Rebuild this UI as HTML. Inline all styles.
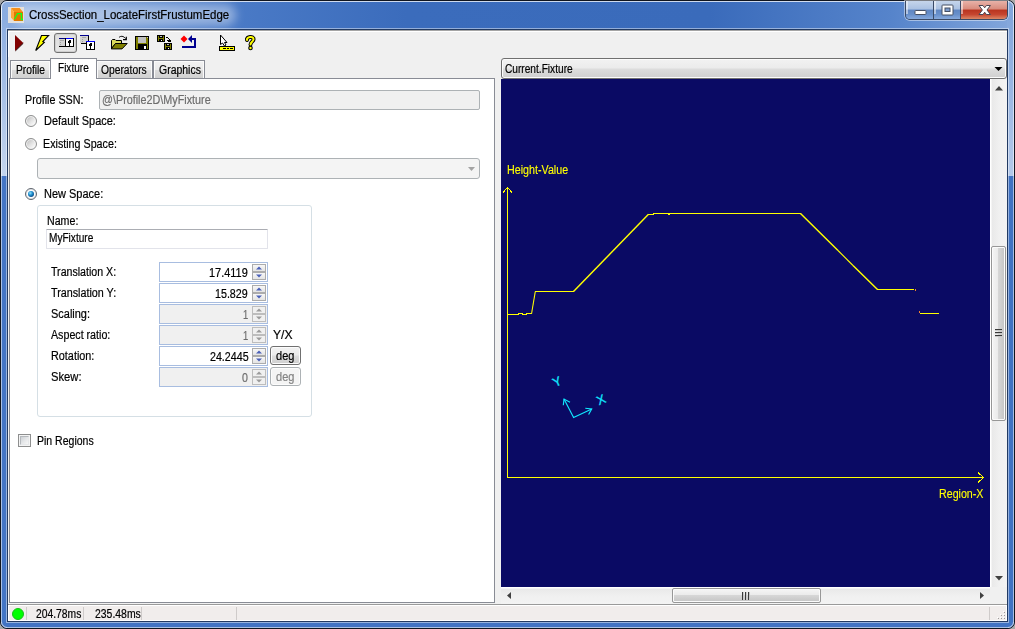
<!DOCTYPE html>
<html><head><meta charset="utf-8">
<title>CrossSection_LocateFirstFrustumEdge</title>
<style>
html,body{margin:0;padding:0;}
body{width:1015px;height:629px;overflow:hidden;position:relative;background:#a9a9a9;font-family:"Liberation Sans",sans-serif;font-size:11px;color:#000;}
.abs,.abs *{position:absolute;box-sizing:border-box;}
#frame{left:0;top:0;width:1015px;height:629px;border:1px solid #10151f;border-radius:7px;
 background:linear-gradient(90deg,#8cade0 0%,#7ea3da 6%,#4b7bc7 22%,#3b6cbc 40%,#3a6bbb 70%,#5684cb 88%,#84a7dc 100%) 0 0/100% 29px no-repeat,#4173c3;}
#frame .inner{left:0;top:0;right:0;bottom:0;border:1px solid rgba(255,255,255,.75);border-radius:6px;}
#clientborder{left:6px;top:28px;width:1003px;height:595px;border:1px solid rgba(255,255,255,.45);}
#clientborder2{left:7px;top:29px;width:1001px;height:593px;border:1px solid #223a62;}
#client{left:8px;top:30px;width:999px;height:591px;background:#f0f0f0;}
.t{white-space:nowrap;line-height:13px;font-size:11px;}

/* title buttons */
#tb{left:905px;top:1px;width:103px;height:19px;border:1px solid #3a4a66;border-top:none;border-radius:0 0 5px 5px;overflow:hidden;box-shadow:0 0 0 1px rgba(255,255,255,.45);}
#tb .b{top:0;height:18px;}
#tb .min{left:0;width:28px;background:linear-gradient(#c6d5eb 0%,#aac1e2 45%,#5f86c2 50%,#6890cb 75%,#86a9dc 100%);border-right:1px solid #3a4a66;}
#tb .max{left:28px;width:27px;background:linear-gradient(#c6d5eb 0%,#aac1e2 45%,#5f86c2 50%,#6890cb 75%,#86a9dc 100%);border-right:1px solid #3a4a66;}
#tb .cls{left:55px;width:46px;background:linear-gradient(#e8b2a8 0%,#d88b7d 45%,#b9341f 50%,#c64630 75%,#dc8866 100%);}
#tb .b:after{content:"";left:0;top:0;right:0;bottom:0;border:1px solid rgba(255,255,255,.5);border-top:none;}
/* toolbar */
#toolbar{left:8px;top:30px;width:999px;height:27px;background:#f0f0f0;border-top:1px solid #a5a5a5;box-shadow:inset 1px 1px 0 #fff;}
#tbact{left:54px;top:33px;width:23px;height:20px;border:1px solid #707070;border-radius:3px;background:linear-gradient(#dedede,#e6e6e6);box-shadow:inset 0 0 0 1px #cfcfcf;}
/* tabs */
.tab{top:60px;height:18px;border:1px solid #898c95;border-bottom:none;background:linear-gradient(#f2f2f2 0%,#ebebeb 50%,#dddddd 50%,#d0d0d0 100%);box-shadow:inset 1px 1px 0 #fbfbfb,inset -1px 0 0 #fbfbfb;}
.tab .t{top:3px;}
#tabsel{left:50px;top:58px;width:47px;height:21px;border:1px solid #898c95;border-bottom:none;background:#fff;}
#tabbody{left:9px;top:78px;width:486px;height:525px;border:1px solid #898c95;background:#fff;}

#fl{left:1px;top:20px;width:7px;height:156px;background:linear-gradient(#8cade0,#c4d5ee);}
#fl2{left:1px;top:176px;width:7px;height:446px;background:#4375c5;}
#fr{left:1007px;top:20px;width:7px;height:156px;background:linear-gradient(#84a7dc,#b4c9ea);}
#fr2{left:1007px;top:176px;width:7px;height:446px;background:#4072c2;}
#fb{left:7px;top:621px;width:1001px;height:7px;background:#4173c3;}
.hl{background:rgba(255,255,255,.55);}

.tx{font-size:12px;line-height:16px;white-space:nowrap;transform-origin:0 0;-webkit-text-stroke:0.2px;}
#glow{left:14px;top:4px;width:222px;height:22px;border-radius:11px;background:rgba(255,255,255,.40);filter:blur(5px);}
/* form */
.inp{background:#fff;border:1px solid #e2e3ea;border-top-color:#abadb3;border-radius:1px;}
.dis{background:#f0f0f0;border:1px solid #adb2b5;border-radius:2px;}
.radio{width:12px;height:12px;border-radius:6px;border:1px solid #8e8f8f;background:linear-gradient(135deg,#c4c4c4 15%,#e2e2e2 50%,#fbfbfb 85%);box-shadow:inset 0 0 0 1px #f3f3f3;}
.radio.on{background:#fff;border-color:#5f656d;box-shadow:inset 0 0 0 1px #dfe2e5;}
.radio.on i{left:2px;top:2px;width:6px;height:6px;border-radius:3px;background:radial-gradient(circle at 38% 35%,#9ae0fa 0%,#2294d2 36%,#0d5390 70%,#183a68 100%);}
#grp{left:37px;top:205px;width:275px;height:212px;border:1px solid #d5dfe5;border-radius:3px;}
.spin{left:159px;width:109px;height:20px;border:1px solid #a8bde0;background:#fff;}
.spin.d{background:#f0f0f0;}
.sb{left:92px;width:14px;height:8px;border:1px solid #acacac;background:linear-gradient(#f7f7f7,#e4e4e4);}
.sb.u{top:1px;} .sb.dn{top:9px;}
.spin.d .sb{border-color:#bdbdbd;background:#f0f0f0;}
.btn{left:270px;width:31px;height:19px;border:1px solid #707070;border-radius:3px;background:linear-gradient(#f2f2f2 0%,#ebebeb 48%,#dddddd 52%,#cfcfcf 100%);box-shadow:inset 0 0 0 1px #fcfcfc;}
.btn.d{border-color:#adb2b5;background:#f4f4f4;}
#chk{left:18px;top:434px;width:13px;height:13px;border:1px solid #8e8f8f;background:#f4f4f4;}
#chk i{left:1px;top:1px;width:9px;height:9px;border:1px solid #b5b9bd;border-right-color:#e6e8ea;border-bottom-color:#e6e8ea;background:linear-gradient(135deg,#cdd1d5 0%,#e4e6e8 50%,#f6f6f6 100%);}
/* right */
#combo{left:501px;top:58px;width:506px;height:21px;border:1px solid #707070;border-radius:3px;background:linear-gradient(#f2f2f2 0%,#ebebeb 48%,#dddddd 52%,#cfcfcf 100%);box-shadow:inset 0 0 0 1px #fcfcfc;}
#canvas{left:501px;top:79px;width:489px;height:508px;background:#0a0a64;}
#vs{left:990px;top:79px;width:17px;height:508px;background:linear-gradient(90deg,#ffffff 0,#ffffff 1px,#e9e9e9 2px,#f0f0f0 9px,#f3f3f3 100%);}
#vth{left:991px;top:246px;width:15px;height:175px;border:1px solid #979797;border-radius:2px;background:linear-gradient(90deg,#f5f5f5 0%,#ebebeb 45%,#d6d6d6 50%,#c4c4c4 100%);box-shadow:inset 0 0 0 1px #fbfbfb;}
#hs{left:501px;top:587px;width:489px;height:17px;background:linear-gradient(#ffffff 0,#ffffff 1px,#e9e9e9 2px,#f0f0f0 9px,#f3f3f3 100%);}
#hth{left:672px;top:588px;width:149px;height:15px;border:1px solid #979797;border-radius:2px;background:linear-gradient(#f5f5f5 0%,#ebebeb 45%,#d6d6d6 50%,#c4c4c4 100%);box-shadow:inset 0 0 0 1px #fbfbfb;}
#corner{left:990px;top:587px;width:17px;height:17px;background:#f0f0f0;}
/* status */
#status{left:8px;top:604px;width:999px;height:17px;background:#f1edec;border-top:1px solid #9a9a9a;box-shadow:inset 1px 1px 0 #fff,inset -1px -1px 0 #fff;}
.sep{top:607px;width:1px;height:13px;background:#cfcbca;}
</style></head><body>
<div class="abs" id="frame"><div class="inner"></div></div>
<div class="abs" id="fl"></div><div class="abs" id="fl2"></div><div class="abs" id="fr"></div><div class="abs" id="fr2"></div><div class="abs" id="fb"></div>
<div class="abs hl" style="left:1px;top:8px;width:1px;height:614px;"></div><div class="abs hl" style="left:1013px;top:8px;width:1px;height:614px;"></div><div class="abs hl" style="left:7px;top:627px;width:1001px;height:1px;"></div>
<div class="abs" id="clientborder"></div>
<div class="abs" id="clientborder2"></div>
<div class="abs" id="glow"></div><svg class="abs" style="left:8px;top:7px" width="16" height="16" viewBox="8 7 16 16">
<rect x="8" y="7" width="16" height="16" fill="#e4e0dc"/>
<polygon points="11,8 19.600,8 23,12 14,12" fill="#f5901a"/>
<polygon points="11,8 14,12 14,21 11,17.500" fill="#ffa840"/>
<polygon points="14,12 23,12 23,21 14,21" fill="#e07800"/>
<path d="M14.500 19.300 L17.500 13.700 L21.400 13.700 L21.400 19.500 L23 19.500" fill="none" stroke="#10ff20" stroke-width="1.300"/>
</svg>
<div class="abs" id="client"></div>
<div class="abs" id="tb"><div class="b min"></div><div class="b max"></div><div class="b cls"></div>
<svg style="left:0;top:0" width="103" height="19" viewBox="0 0 103 19">
<rect x="9" y="9.500" width="11" height="4" rx="0.800" fill="#fff" stroke="#454f63" stroke-width="1"/>
<rect x="36" y="4" width="11" height="10" rx="0.800" fill="#fff" stroke="#454f63" stroke-width="1"/>
<rect x="39" y="7" width="5" height="3.500" fill="#7d9ccd" stroke="#454f63" stroke-width="1"/>
<path d="M73 4.500 L77 4.500 L78.700 6.800 L80.400 4.500 L84.400 4.500 L81 9 L84.400 13.500 L80.400 13.500 L78.700 11.200 L77 13.500 L73 13.500 L76.400 9 Z" fill="#fff" stroke="#4a4550" stroke-width="1" stroke-linejoin="round"/>
</svg></div>
<div class="abs" id="toolbar"></div>
<div class="abs" id="tbact"></div>
<svg class="abs" style="left:0;top:30px" width="300" height="28" viewBox="0 30 300 28">
<!-- play -->
<polygon points="15,35 23.300,43 15,51" fill="#800000"/>
<path d="M15.500 50.800 L23.300 43.200" stroke="#200000" stroke-width="1" fill="none"/>
<!-- lightning -->
<polygon points="41.500,35.500 48.600,35.500 42.800,41.600 44.300,42.400 35.700,50.500" fill="#ffff00" stroke="#000" stroke-width="1.100" stroke-linejoin="miter"/>
<g shape-rendering="crispEdges">
<!-- panes icon -->
<rect x="59" y="38" width="7" height="1" fill="#000080"/>
<rect x="66" y="38" width="8" height="1" fill="#0000ff"/>
<rect x="59" y="39" width="6" height="7" fill="#d2d2d2"/>
<rect x="65" y="38" width="1" height="9" fill="#000"/>
<rect x="66" y="39" width="7" height="7" fill="#fff"/>
<rect x="73" y="38" width="1" height="9" fill="#000"/>
<rect x="59" y="46" width="15" height="1" fill="#000"/>
<rect x="60" y="40" width="4" height="1" fill="#a8a8a8"/>
<rect x="60" y="42" width="1" height="1" fill="#a0a0a0"/>
<rect x="60" y="44" width="1" height="1" fill="#a0a0a0"/>
<rect x="68" y="40" width="3" height="3" fill="#000"/>
<rect x="68" y="40" width="1" height="1" fill="#fff"/>
<rect x="69" y="43" width="1" height="3" fill="#000"/>
<!-- cascaded windows -->
<rect x="80" y="35" width="9" height="1" fill="#000090"/>
<rect x="80" y="36" width="8" height="7" fill="#d2d2d2"/>
<rect x="88" y="36" width="1" height="8" fill="#000"/>
<rect x="81" y="43" width="8" height="1" fill="#000"/>
<rect x="82" y="37" width="4" height="1" fill="#a8a8a8"/>
<rect x="82" y="39" width="1" height="1" fill="#a0a0a0"/>
<rect x="82" y="41" width="1" height="1" fill="#a0a0a0"/>
<rect x="86" y="41" width="9" height="1" fill="#0000ff"/>
<rect x="86" y="42" width="1" height="8" fill="#000"/>
<rect x="87" y="42" width="7" height="7" fill="#fff"/>
<rect x="94" y="42" width="1" height="8" fill="#000"/>
<rect x="86" y="49" width="9" height="1" fill="#000"/>
<rect x="89" y="43" width="3" height="3" fill="#000"/>
<rect x="89" y="43" width="1" height="1" fill="#fff"/>
<rect x="90" y="46" width="1" height="3" fill="#000"/>
<!-- floppy -->
<rect x="135" y="36" width="14" height="14" fill="#000"/>
<rect x="136" y="37" width="12" height="12" fill="#808000"/>
<rect x="138" y="37" width="8" height="6" fill="#c0c0c0"/>
<rect x="147" y="37" width="1" height="1" fill="#c0c0c0"/>
<rect x="138" y="44" width="9" height="5" fill="#000"/>
<rect x="144" y="46" width="2" height="3" fill="#fff"/>
<!-- double floppy -->
<rect x="157" y="35" width="8" height="7" fill="#000"/>
<rect x="158" y="36" width="6" height="5" fill="#808000"/>
<rect x="159" y="36" width="4" height="2" fill="#000"/>
<rect x="160" y="36" width="2" height="1" fill="#c0c0c0"/>
<rect x="159" y="39" width="4" height="2" fill="#000"/>
<rect x="161" y="40" width="1" height="1" fill="#fff"/>
<rect x="164" y="43" width="8" height="7" fill="#000"/>
<rect x="165" y="44" width="6" height="5" fill="#808000"/>
<rect x="166" y="44" width="4" height="2" fill="#000"/>
<rect x="167" y="44" width="2" height="1" fill="#c0c0c0"/>
<rect x="166" y="47" width="4" height="2" fill="#000"/>
<rect x="168" y="48" width="1" height="1" fill="#fff"/>
<rect x="166" y="37" width="2" height="1" fill="#000"/>
<rect x="168" y="38" width="1" height="1" fill="#000"/>
<rect x="169" y="39" width="1" height="2" fill="#000"/>
<rect x="167" y="40" width="4" height="1" fill="#000"/>
<rect x="168" y="41" width="3" height="1" fill="#000"/>
<!-- blue arrow -->
<rect x="182" y="46" width="14" height="2" fill="#000090"/>
<rect x="194" y="38" width="2" height="9" fill="#000090"/>
<rect x="189" y="38" width="6" height="2" fill="#000090"/>
<!-- ruler -->
<rect x="219" y="46" width="16" height="5" fill="#000"/>
<rect x="220" y="47" width="14" height="3" fill="#ffff00"/>
<rect x="223" y="48" width="3" height="1" fill="#000"/>
<rect x="227" y="48" width="2" height="1" fill="#000"/>
<rect x="230" y="48" width="3" height="1" fill="#000"/>
</g>
<!-- folder -->
<path d="M111.500 48.500 L111.500 40.500 L112.500 39.500 L115 39.500 L116 40.500 L121.500 40.500 L121.500 43.500 L115.500 43.500 Z" fill="#dada5c" stroke="#000" stroke-width="1"/>
<path d="M115.500 43.500 L127.200 43.500 L122 48.900 L111.200 48.900 Z" fill="#808000" stroke="#000" stroke-width="1"/>
<path d="M119 37.500 C120.500 35.800 123.500 35.800 125.500 38.500" fill="none" stroke="#000" stroke-width="1"/>
<path d="M123 39.700 L126.300 39.700 L126.300 36.800" fill="none" stroke="#000" stroke-width="1.200"/>
<!-- red dot & arrowhead -->
<polygon points="184,35.500 187.500,39 184,42.500 180.500,39" fill="#ff0000"/>
<polygon points="188,39 192,35 192,43" fill="#000090"/>
<!-- cursor -->
<path d="M220.500 35 L220.500 44.500 L222.500 43 L224.500 46 L226 45 L224.500 42.500 L227 42.500 Z" fill="#fff" stroke="#000" stroke-width="1"/>
<!-- question -->
<path d="M247 40 C246 36.500 254 35.500 253.500 39.500 C253.300 41.500 250.500 42 250.500 44.500" fill="none" stroke="#000" stroke-width="4" stroke-linecap="round"/>
<circle cx="250.500" cy="48" r="2.300" fill="#000"/>
<path d="M247 40 C246 36.500 254 35.500 253.500 39.500 C253.300 41.500 250.500 42 250.500 44.500" fill="none" stroke="#ffff00" stroke-width="2" stroke-linecap="round"/>
<circle cx="250.500" cy="48" r="1.200" fill="#ffff00"/>
</svg>
<div class="abs" id="tabbody"></div>
<div class="abs tab" style="left:10px;width:41px;"></div>
<div class="abs tab" style="left:96px;width:57px;"></div>
<div class="abs tab" style="left:153px;width:52px;"></div>
<div class="abs" id="tabsel"></div>
<div class="abs dis" style="left:99px;top:90px;width:381px;height:20px;"></div>
<div class="abs radio" style="left:25px;top:115px;"></div>
<div class="abs radio" style="left:25px;top:138px;"></div>
<div class="abs dis" style="left:37px;top:158px;width:443px;height:21px;background:#f4f4f4;border-radius:3px;"></div>
<svg class="abs" style="left:466px;top:165px" width="10" height="8" viewBox="0 0 10 8"><polygon points="2,2 9,2 5.500,6" fill="#a3a3a3"/></svg>
<div class="abs radio on" style="left:25px;top:188px;"><i></i></div>
<div class="abs" id="grp"></div>
<div class="abs inp" style="left:46px;top:229px;width:222px;height:20px;"></div>
<div class="abs spin" style="top:262px;"><div class="sb u"></div><div class="sb dn"></div><svg style="left:92px;top:1px" width="14" height="16" viewBox="0 0 14 16"><polygon points="7,2.500 10,5.500 4,5.500" fill="#4a60b8"/><polygon points="4,10.500 10,10.500 7,13.500" fill="#4a60b8"/></svg></div>
<div class="abs spin" style="top:283px;"><div class="sb u"></div><div class="sb dn"></div><svg style="left:92px;top:1px" width="14" height="16" viewBox="0 0 14 16"><polygon points="7,2.500 10,5.500 4,5.500" fill="#4a60b8"/><polygon points="4,10.500 10,10.500 7,13.500" fill="#4a60b8"/></svg></div>
<div class="abs spin d" style="top:304px;"><div class="sb u"></div><div class="sb dn"></div><svg style="left:92px;top:1px" width="14" height="16" viewBox="0 0 14 16"><polygon points="7,2.500 10,5.500 4,5.500" fill="#9a9a9a"/><polygon points="4,10.500 10,10.500 7,13.500" fill="#9a9a9a"/></svg></div>
<div class="abs spin d" style="top:325px;"><div class="sb u"></div><div class="sb dn"></div><svg style="left:92px;top:1px" width="14" height="16" viewBox="0 0 14 16"><polygon points="7,2.500 10,5.500 4,5.500" fill="#9a9a9a"/><polygon points="4,10.500 10,10.500 7,13.500" fill="#9a9a9a"/></svg></div>
<div class="abs spin" style="top:346px;"><div class="sb u"></div><div class="sb dn"></div><svg style="left:92px;top:1px" width="14" height="16" viewBox="0 0 14 16"><polygon points="7,2.500 10,5.500 4,5.500" fill="#4a60b8"/><polygon points="4,10.500 10,10.500 7,13.500" fill="#4a60b8"/></svg></div>
<div class="abs spin d" style="top:367px;"><div class="sb u"></div><div class="sb dn"></div><svg style="left:92px;top:1px" width="14" height="16" viewBox="0 0 14 16"><polygon points="7,2.500 10,5.500 4,5.500" fill="#9a9a9a"/><polygon points="4,10.500 10,10.500 7,13.500" fill="#9a9a9a"/></svg></div>
<div class="abs btn" style="top:346px;"></div>
<div class="abs btn d" style="top:367px;"></div>
<div class="abs" id="chk"><i></i></div>
<div class="abs" id="combo"></div>
<svg class="abs" style="left:993px;top:65px" width="12" height="8" viewBox="0 0 12 8"><polygon points="1.500,2 9.500,2 5.500,6" fill="#000"/></svg>
<div class="abs" id="canvas"></div>
<div class="abs" id="vs"></div><div class="abs" id="vth"></div>
<div class="abs" id="hs"></div><div class="abs" id="hth"></div>
<div class="abs" id="corner"></div>
<svg class="abs" style="left:501px;top:79px" width="506" height="525" viewBox="501 79 506 525">
<g shape-rendering="crispEdges" fill="none" stroke="#ffff00" stroke-width="1">
<path d="M507.500 477.500 L507.500 187"/>
<path d="M503 192.500 L507.500 187.500 L512 192.500"/>
<path d="M507 477.500 L984 477.500"/>
<path d="M978 472.500 L983.500 477.500 L978 482.500"/>
<path d="M507 314.500 L518 314.500 L519 313.500 L522 313.500 L523 314.500 L526 314.500 L527 313.500 L531 313.500"/>
<path d="M535 291.500 L574 291.500"/>
<path d="M648 214.500 L653 214.500 L654 213.500 L668 213.500 L669 214.500 L670 213.500 L801 213.500"/>
<path d="M877 289.500 L914 289.500"/>
<path d="M920 313.500 L939 313.500"/>
</g>
<g fill="none" stroke="#ffff00" stroke-width="1.450"><path d="M573.500 291.500 L648.500 214.300"/><path d="M800.500 213.500 L838 250.500 M853 265.500 L877.500 289.500"/></g>
<g fill="none" stroke="#ffff00" stroke-width="1.100"><path d="M531.500 314 L535.300 291.500"/><path d="M838 250.500 L853 265.500"/></g>
<rect x="915" y="289" width="1" height="2" fill="#f08030"/>
<rect x="919" y="311" width="1" height="2" fill="#f08030"/>
<g fill="none" stroke="#10e8ff" stroke-width="1.150">
<path d="M591.700 408.900 L573.600 417.500 L564 399.100"/>
<path d="M585.300 408.300 L591.700 408.900 L588.600 414.600"/>
<path d="M563.300 405.300 L564 399.100 L570 402.200"/>
</g>
<g fill="#3a3a3a" shape-rendering="crispEdges">
<rect x="995" y="329" width="7" height="1"/><rect x="995" y="332" width="7" height="1"/><rect x="995" y="335" width="7" height="1"/>
<rect x="742" y="592" width="1" height="8"/><rect x="745" y="592" width="1" height="8"/><rect x="748" y="592" width="1" height="8"/>
</g>
<g fill="#c8c8c8" shape-rendering="crispEdges">
<rect x="995" y="330" width="7" height="1"/><rect x="995" y="333" width="7" height="1"/><rect x="995" y="336" width="7" height="1"/>
<rect x="743" y="592" width="1" height="8"/><rect x="746" y="592" width="1" height="8"/><rect x="749" y="592" width="1" height="8"/>
</g>
<g fill="#404040">
<polygon points="995,90.500 1003,90.500 999,86"/>
<polygon points="995,576 1003,576 999,580.500"/>
<polygon points="507,595.500 511,592 511,599"/>
<polygon points="984,595.500 980,592 980,599"/>
</g>
</svg>
<div class="abs tx" style="left:553px;top:374px;color:#10e8ff;font-size:12.5px;-webkit-text-stroke:0.3px #10e8ff;transform:rotate(-24deg);transform-origin:50% 50%;">Y</div>
<div class="abs tx" style="left:597px;top:392px;color:#10e8ff;font-size:12.5px;-webkit-text-stroke:0.3px #10e8ff;transform:rotate(-24deg);transform-origin:50% 50%;">X</div>

<div class="abs" id="status"></div>
<div class="abs" style="left:12px;top:608px;width:12px;height:12px;border-radius:6px;background:#00ff00;border:1px solid #18c018;"></div>
<div class="abs sep" style="left:26px;"></div><div class="abs sep" style="left:83px;"></div><div class="abs sep" style="left:141px;"></div><div class="abs sep" style="left:236px;"></div><div class="abs sep" style="left:989px;"></div>
<svg class="abs" style="left:994px;top:608px" width="12" height="12" viewBox="994 608 12 12" shape-rendering="crispEdges"><g fill="#fff"><rect x="1003" y="611" width="1" height="1"/><rect x="1000" y="614" width="1" height="1"/><rect x="1003" y="614" width="1" height="1"/><rect x="997" y="617" width="1" height="1"/><rect x="1000" y="617" width="1" height="1"/><rect x="1003" y="617" width="1" height="1"/></g><g fill="#9c9898"><rect x="1004" y="612" width="1" height="1"/><rect x="1001" y="615" width="1" height="1"/><rect x="1004" y="615" width="1" height="1"/><rect x="998" y="618" width="1" height="1"/><rect x="1001" y="618" width="1" height="1"/><rect x="1004" y="618" width="1" height="1"/></g></svg>

<!--TEXTS-->
<div class="abs tx" style="left:28.68px;top:7px;color:#000;transform:scaleX(0.9559);">CrossSection_LocateFirstFrustumEdge</div>
<div class="abs tx" style="left:16.41px;top:62px;color:#000;transform:scaleX(0.8537);">Profile</div>
<div class="abs tx" style="left:58.12px;top:60px;color:#000;transform:scaleX(0.8377);">Fixture</div>
<div class="abs tx" style="left:101.03px;top:62px;color:#000;transform:scaleX(0.8566);">Operators</div>
<div class="abs tx" style="left:158.70px;top:62px;color:#000;transform:scaleX(0.8725);">Graphics</div>
<div class="abs tx" style="left:25.19px;top:92px;color:#000;transform:scaleX(0.8942);">Profile SSN:</div>
<div class="abs tx" style="left:101.86px;top:92px;color:#6d6d6d;transform:scaleX(0.8988);">@\Profile2D\MyFixture</div>
<div class="abs tx" style="left:43.70px;top:113px;color:#000;transform:scaleX(0.9126);">Default Space:</div>
<div class="abs tx" style="left:43.40px;top:136px;color:#000;transform:scaleX(0.8929);">Existing Space:</div>
<div class="abs tx" style="left:44.25px;top:186px;color:#000;transform:scaleX(0.9154);">New Space:</div>
<div class="abs tx" style="left:46.60px;top:213px;color:#000;transform:scaleX(0.8869);">Name:</div>
<div class="abs tx" style="left:49.38px;top:230px;color:#000;transform:scaleX(0.8407);">MyFixture</div>
<div class="abs tx" style="left:51.31px;top:264px;color:#000;transform:scaleX(0.8851);">Translation X:</div>
<div class="abs tx" style="left:51.28px;top:285px;color:#000;transform:scaleX(0.8966);">Translation Y:</div>
<div class="abs tx" style="left:50.75px;top:306px;color:#000;transform:scaleX(0.9139);">Scaling:</div>
<div class="abs tx" style="left:50.96px;top:327px;color:#000;transform:scaleX(0.8887);">Aspect ratio:</div>
<div class="abs tx" style="left:51.33px;top:348px;color:#000;transform:scaleX(0.9026);">Rotation:</div>
<div class="abs tx" style="left:50.55px;top:369px;color:#000;transform:scaleX(0.9369);">Skew:</div>
<div class="abs tx" style="left:209.42px;top:265px;color:#000;transform:scaleX(0.9113);">17.4119</div>
<div class="abs tx" style="left:215.36px;top:286px;color:#000;transform:scaleX(0.8909);">15.829</div>
<div class="abs tx" style="left:243.05px;top:307px;color:#6d6d6d;transform:scaleX(0.7800);">1</div>
<div class="abs tx" style="left:243.05px;top:328px;color:#6d6d6d;transform:scaleX(0.7800);">1</div>
<div class="abs tx" style="left:210.19px;top:349px;color:#000;transform:scaleX(0.8892);">24.2445</div>
<div class="abs tx" style="left:242.35px;top:370px;color:#6d6d6d;transform:scaleX(0.8841);">0</div>
<div class="abs tx" style="left:272.58px;top:327px;color:#000;transform:scaleX(1.0077);">Y/X</div>
<div class="abs tx" style="left:275.66px;top:348px;color:#000;transform:scaleX(0.9189);">deg</div>
<div class="abs tx" style="left:275.66px;top:369px;color:#838383;transform:scaleX(0.9189);">deg</div>
<div class="abs tx" style="left:36.79px;top:433px;color:#000;transform:scaleX(0.8762);">Pin Regions</div>
<div class="abs tx" style="left:36.23px;top:606px;color:#000;transform:scaleX(0.8593);">204.78ms</div>
<div class="abs tx" style="left:94.92px;top:606px;color:#000;transform:scaleX(0.8690);">235.48ms</div>
<div class="abs tx" style="left:505.39px;top:61px;color:#000;transform:scaleX(0.8456);">Current.Fixture</div>
<div class="abs tx" style="left:507.10px;top:162px;color:#ffff00;-webkit-text-stroke:0.1px #ffff00;transform:scaleX(0.8932);">Height-Value</div>
<div class="abs tx" style="left:939.31px;top:486px;color:#ffff00;-webkit-text-stroke:0.1px #ffff00;transform:scaleX(0.8886);">Region-X</div>
</body></html>
